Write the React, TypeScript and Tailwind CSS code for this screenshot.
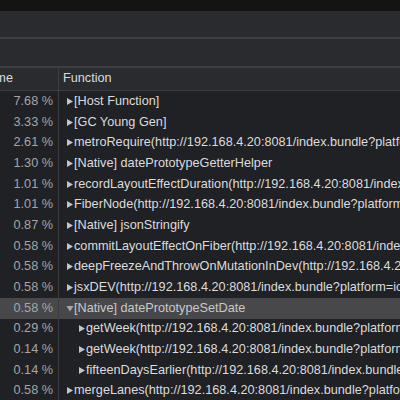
import React from "react";

type Row = {
  pct: string;
  name: string;
  depth?: number;
  open?: boolean;
  selected?: boolean;
};

const URL = "(http://192.168.4.20:8081/index.bundle?platform=ios&dev=true&lazy=true&minify=false";

const rows: Row[] = [
  { pct: "7.68 %", name: "[Host Function]" },
  { pct: "3.33 %", name: "[GC Young Gen]" },
  { pct: "2.61 %", name: "metroRequire" + URL },
  { pct: "1.30 %", name: "[Native] datePrototypeGetterHelper" },
  { pct: "1.01 %", name: "recordLayoutEffectDuration" + URL },
  { pct: "1.01 %", name: "FiberNode" + URL },
  { pct: "0.87 %", name: "[Native] jsonStringify" },
  { pct: "0.58 %", name: "commitLayoutEffectOnFiber" + URL },
  { pct: "0.58 %", name: "deepFreezeAndThrowOnMutationInDev" + URL },
  { pct: "0.58 %", name: "jsxDEV" + URL },
  { pct: "0.58 %", name: "[Native] datePrototypeSetDate", open: true, selected: true },
  { pct: "0.29 %", name: "getWeek" + URL, depth: 1 },
  { pct: "0.14 %", name: "getWeek" + URL, depth: 1 },
  { pct: "0.14 %", name: "fifteenDaysEarlier" + URL, depth: 1 },
  { pct: "0.58 %", name: "mergeLanes" + URL },
];

function Caret({ open }: { open?: boolean }) {
  return (
    <svg width="8" height="9" viewBox="0 0 8 9" className="shrink-0">
      {open ? (
        <path d="M0.5 2 L7.5 2 L4 7.5 Z" fill="#a9a9ab" />
      ) : (
        <path d="M1 1 L7 4.5 L1 8 Z" fill="#c4c4c6" />
      )}
    </svg>
  );
}

export default function App() {
  return (
    <div
      className="w-[400px] h-[400px] overflow-hidden bg-[#202124] text-[12.7px] flex flex-col"
      style={{ fontFamily: '"Liberation Sans", Arial, sans-serif' }}
    >
      <div className="h-[11px] shrink-0 bg-[#141415]" />
      <div className="h-[28px] shrink-0 bg-[#2a2b2f] border-b-2 border-[#3d3e42]" />
      <div className="h-[29px] shrink-0 bg-[#2a2b2f] border-b-2 border-[#3d3e42]" />
      <div className="h-[23px] shrink-0 flex bg-[#2a2b2f] border-b border-[#3d3e42]">
        <div className="w-[59px] shrink-0 border-r border-[#3d3e42] flex items-center overflow-hidden">
          <div className="w-[13px] flex justify-end whitespace-nowrap text-[#dcdcde]">Self Time</div>
        </div>
        <div className="flex items-center pl-[4px] text-[#dcdcde]">Function</div>
      </div>
      <div className="flex flex-col">
        {rows.map((r, i) => (
          <div
            key={i}
            className={
              "h-[20.7px] shrink-0 flex items-center " + (r.selected ? "bg-[#48484b]" : "")
            }
          >
            <div className="w-[59px] shrink-0 h-full border-r border-[#3a3b3f] flex items-center justify-end pr-[5px] text-[#a5a5a8]">
              {r.pct}
            </div>
            <div
              className={
                "flex items-center whitespace-nowrap text-[#dcdcde] " +
                (r.depth ? "pl-[19px]" : "pl-[7px]")
              }
            >
              <Caret open={r.open} />
              <span className={r.open ? "text-[#c8c8ca]" : ""}>{r.name}</span>
            </div>
          </div>
        ))}
      </div>
    </div>
  );
}
